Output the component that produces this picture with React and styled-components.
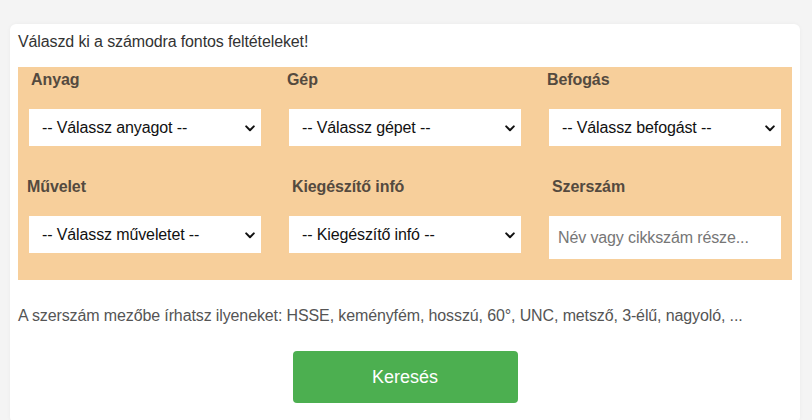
import React from "react";
import styled, { createGlobalStyle } from "styled-components";

const Global = createGlobalStyle`
  html, body { margin: 0; padding: 0; background: #f4f4f4; }
  body { font-family: "Liberation Sans", Arial, sans-serif; }
  * { box-sizing: border-box; }
`;

const Page = styled.div`
  padding: 24px 12px 0 10px;
`;

const Card = styled.div`
  background: #fff;
  border-radius: 6px;
  padding: 8px 8px 20px;
  box-shadow: 0 0 4px rgba(0, 0, 0, 0.04);
`;

const Heading = styled.p`
  margin: 0 0 16px;
  font-size: 16px;
  line-height: 19px;
  letter-spacing: -0.12px;
  color: #333;
`;

const Panel = styled.div`
  background: #f7cf9b;
  padding: 3px 11px 21px;
  display: grid;
  grid-template-columns: repeat(3, 232px);
  column-gap: 28px;
  row-gap: 31px;
`;

const Field = styled.div`
  display: flex;
  flex-direction: column;
`;

const Label = styled.label`
  font-size: 16px;
  font-weight: bold;
  line-height: 20px;
  letter-spacing: -0.1px;
  color: #544a3f;
  margin: 0 0 19px ${(p) => p.$shift || 0}px;
`;

const SelectWrap = styled.div`
  position: relative;
`;

const Select = styled.select`
  display: block;
  appearance: none;
  -webkit-appearance: none;
  height: 37px;
  width: 100%;
  border: none;
  border-radius: 0;
  background: #fff;
  font-family: "Liberation Sans", Arial, sans-serif;
  font-size: 16px;
  letter-spacing: -0.12px;
  color: #111;
  padding: 0 24px 0 13px;
  outline: none;
`;

const Chevron = styled.svg`
  position: absolute;
  right: 6px;
  top: 50%;
  width: 10px;
  height: 7px;
  margin-top: -3px;
  pointer-events: none;
`;

const Input = styled.input`
  height: 43px;
  width: 100%;
  border: none;
  background: #fff;
  font-family: "Liberation Sans", Arial, sans-serif;
  font-size: 16px;
  letter-spacing: -0.12px;
  padding: 0 8px 0 9px;
  outline: none;
  &::placeholder { color: #767676; }
`;

const Hint = styled.p`
  margin: 27px 0 26px;
  font-size: 16px;
  line-height: 18px;
  letter-spacing: -0.12px;
  color: #555;
`;

const ButtonRow = styled.div`
  display: flex;
  justify-content: center;
`;

const Button = styled.button`
  width: 225px;
  height: 52px;
  background: #4caf50;
  color: #fff;
  border: none;
  border-radius: 4px;
  font-family: "Liberation Sans", Arial, sans-serif;
  font-size: 18px;
  cursor: pointer;
`;

const selects = [
  { label: "Anyag", ph: "-- Válassz anyagot --", shift: 2 },
  { label: "Gép", ph: "-- Válassz gépet --", shift: -2 },
  { label: "Befogás", ph: "-- Válassz befogást --", shift: -2 },
  { label: "Művelet", ph: "-- Válassz műveletet --", shift: -2 },
  { label: "Kiegészítő infó", ph: "-- Kiegészítő infó --", shift: 3 },
];

export default function App() {
  return (
    <Page>
      <Global />
      <Card>
        <Heading>Válaszd ki a számodra fontos feltételeket!</Heading>
        <Panel>
          {selects.map((s) => (
            <Field key={s.label}>
              <Label $shift={s.shift}>{s.label}</Label>
              <SelectWrap>
                <Select defaultValue="">
                  <option value="">{s.ph}</option>
                </Select>
                <Chevron viewBox="0 0 10 7">
                  <path d="M1.2 1.4 L5 5.2 L8.8 1.4" fill="none" stroke="#111" strokeWidth="2" strokeLinecap="round" strokeLinejoin="round" />
                </Chevron>
              </SelectWrap>
            </Field>
          ))}
          <Field>
            <Label $shift={3}>Szerszám</Label>
            <Input placeholder="Név vagy cikkszám része..." />
          </Field>
        </Panel>
        <Hint>
          A szerszám mezőbe írhatsz ilyeneket: HSSE, keményfém, hosszú, 60°, UNC, metsző, 3-élű, nagyoló, ...
        </Hint>
        <ButtonRow>
          <Button>Keresés</Button>
        </ButtonRow>
      </Card>
    </Page>
  );
}
